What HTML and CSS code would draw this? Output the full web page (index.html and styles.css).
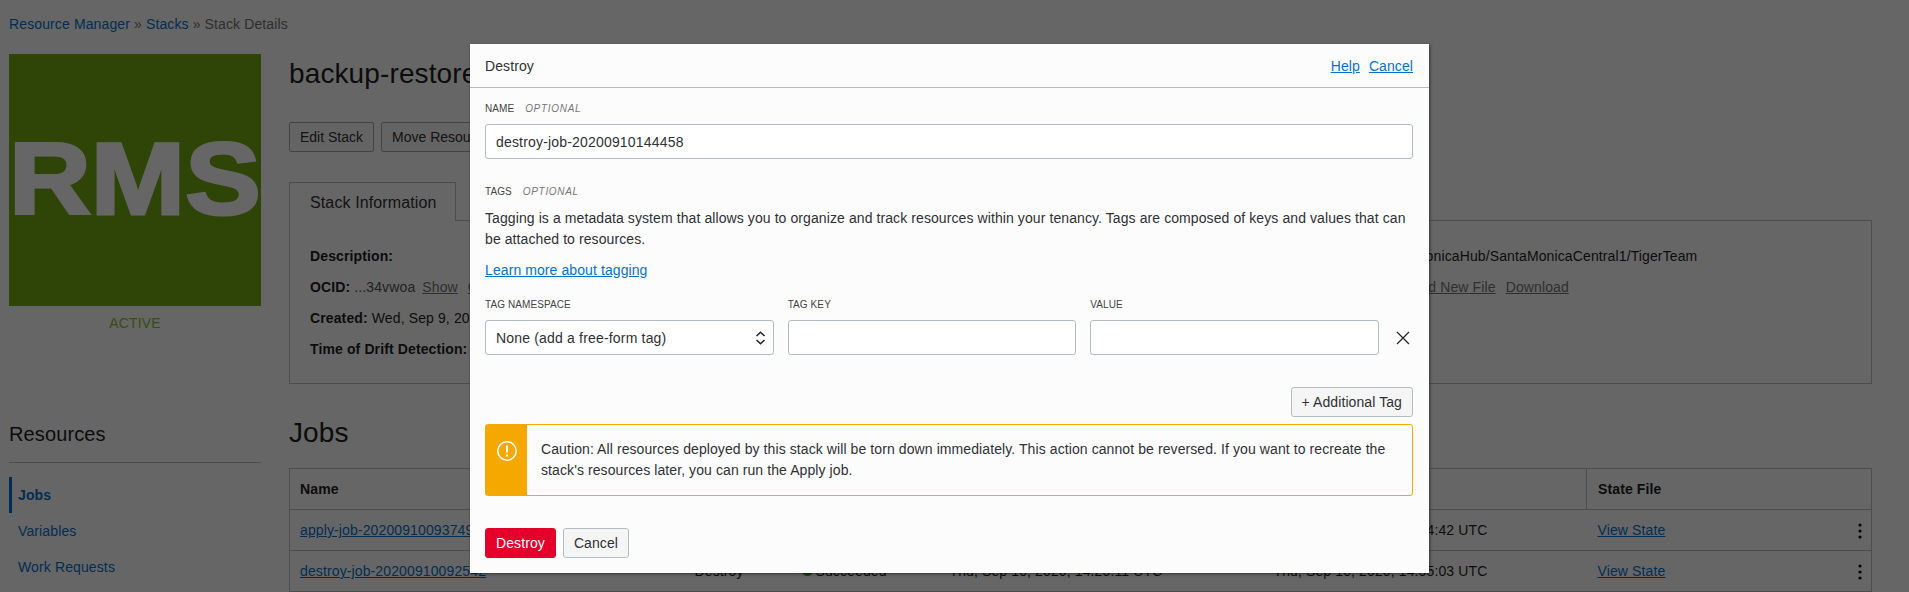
FILE: index.html
```html
<!DOCTYPE html>
<html lang="en">
<head>
<meta charset="utf-8">
<title>Stack Details</title>
<link rel="stylesheet" href="styles.css">
</head>
<body>
  <div class="page">
    <div class="breadcrumb"><a>Resource Manager</a> » <a>Stacks</a> » Stack Details</div>

    <div class="top-row">
      <div class="side">
        <div class="avatar"><span>RMS</span></div>
        <div class="status">ACTIVE</div>
      </div>
      <div class="main">
        <h1>backup-restore</h1>
        <div class="btn-row">
          <button class="btn">Edit Stack</button>
          <button class="btn">Move Resource</button>
          <button class="btn">Terraform Actions</button>
        </div>
        <div class="tabs"><div class="tab">Stack Information</div></div>
        <div class="panel">
          <div class="info-col">
            <p><b>Description:</b></p>
            <p><b>OCID:</b> <span class="muted">...34vwoa</span> <a class="plain">Show</a> <a class="plain">Copy</a></p>
            <p><b>Created:</b> Wed, Sep 9, 2020, 14:31:22 UTC</p>
            <p class="drift"><b>Time of Drift Detection:</b></p>
          </div>
          <div class="info-col">
            <p><b>Compartment:</b> ateam/SantaMonicaHub/SantaMonicaCentral1/TigerTeam</p>
            <p class="file-row"><b>Configuration:</b> <a class="plain">Upload New File</a> <a class="plain">Download</a></p>
          </div>
        </div>
      </div>
    </div>

    <div class="bottom-row">
      <div class="side">
        <h3>Resources</h3>
        <ul class="nav">
          <li class="on">Jobs</li>
          <li>Variables</li>
          <li>Work Requests</li>
        </ul>
      </div>
      <div class="main">
        <h2>Jobs</h2>
        <table class="jobs">
          <colgroup>
            <col class="c-name"><col class="c-type"><col class="c-state"><col class="c-time"><col class="c-time2"><col>
          </colgroup>
          <tr>
            <th>Name</th><th>Type</th><th>State</th><th>Created</th><th>Finished</th><th class="state-file">State File</th>
          </tr>
          <tr>
            <td><a>apply-job-20200910093749</a></td><td>Apply</td>
            <td><span class="dot"></span>Succeeded</td>
            <td>Thu, Sep 10, 2020, 09:38:02 UTC</td><td>Thu, Sep 10, 2020, 09:44:42 UTC</td>
            <td class="state-file"><a>View State</a>
              <svg class="kebab" width="4" height="16" viewBox="0 0 4 16"><circle cx="2" cy="2" r="1.6"/><circle cx="2" cy="8" r="1.6"/><circle cx="2" cy="14" r="1.6"/></svg>
            </td>
          </tr>
          <tr>
            <td><a>destroy-job-20200910092542</a></td><td>Destroy</td>
            <td><span class="dot"></span>Succeeded</td>
            <td>Thu, Sep 10, 2020, 14:25:11 UTC</td><td>Thu, Sep 10, 2020, 14:55:03 UTC</td>
            <td class="state-file"><a>View State</a>
              <svg class="kebab" width="4" height="16" viewBox="0 0 4 16"><circle cx="2" cy="2" r="1.6"/><circle cx="2" cy="8" r="1.6"/><circle cx="2" cy="14" r="1.6"/></svg>
            </td>
          </tr>
        </table>
      </div>
    </div>
  </div>

  <div class="overlay"></div>

  <div class="modal">
    <div class="modal-head">
      <span>Destroy</span>
      <span class="head-links"><a>Help</a><a>Cancel</a></span>
    </div>
    <div class="modal-body">
      <label class="field-label">NAME <i>OPTIONAL</i></label>
      <input class="field" type="text" value="destroy-job-20200910144458">

      <label class="field-label tags-label">TAGS <i>OPTIONAL</i></label>
      <p class="tag-help">Tagging is a metadata system that allows you to organize and track resources within your tenancy. Tags are composed of keys and values that can be attached to resources.</p>
      <a class="learn">Learn more about tagging</a>

      <div class="tag-grid">
        <label class="field-label">TAG NAMESPACE</label>
        <label class="field-label">TAG KEY</label>
        <label class="field-label">VALUE</label>
        <span></span>
        <div class="field select">
          <span>None (add a free-form tag)</span>
          <svg width="11" height="14" viewBox="0 0 11 14" fill="none" stroke="#222" stroke-width="1.5"><path d="M1.5 5 5.5 1.2 9.5 5"/><path d="M1.5 9 5.5 12.8 9.5 9"/></svg>
        </div>
        <input class="field" type="text">
        <input class="field" type="text">
        <svg class="remove" width="14" height="14" viewBox="0 0 14 14" fill="none" stroke="#222" stroke-width="1.2"><path d="M1 1 13 13M13 1 1 13"/></svg>
      </div>

      <div class="add-row"><button class="btn-light">+ Additional Tag</button></div>

      <div class="warn">
        <div class="warn-icon">
          <svg width="22" height="22" viewBox="0 0 22 22" fill="none" stroke="#fff" stroke-width="1.5"><circle cx="11" cy="11" r="9.2"/><path d="M11 5.5v7" stroke-width="2"/><path d="M11 14.4v2" stroke-width="2"/></svg>
        </div>
        <div class="warn-text">Caution: All resources deployed by this stack will be torn down immediately. This action cannot be reversed. If you want to recreate the stack's resources later, you can run the Apply job.</div>
      </div>

      <div class="actions">
        <button class="btn-danger">Destroy</button>
        <button class="btn-light">Cancel</button>
      </div>
    </div>
  </div>
</body>
</html>
```

FILE: styles.css
```css
html, body {
  margin: 0;
  height: 592px;
  overflow: hidden;
}
body {
  position: relative;
  background-color: white;
  color: #1f1f1f;
  font-family: "Liberation Sans", Arial, sans-serif;
  font-size: 14px;
  letter-spacing: 0.12px;
}
a {
  color: #0572ce;
}
.page {
  padding: 14px 37px 0 9px;
}
.breadcrumb {
  line-height: 20px;
  color: #757575;
  margin-bottom: 20px;
}
.top-row, .bottom-row {
  display: flex;
  gap: 28px;
}
.bottom-row {
  margin-top: 32px;
}
.side {
  width: 252px;
  flex: none;
}
.main {
  flex: 1;
  min-width: 0;
}
.avatar {
  width: 252px;
  height: 252px;
  display: flex;
  align-items: center;
  justify-content: center;
  overflow: hidden;
  background-color: #75ac16;
  color: white;
}
.avatar span {
  display: block;
  font-size: 102.5px;
  font-weight: bold;
  letter-spacing: 0;
  -webkit-text-stroke: 3px white;
  transform: translateY(-1px) scaleX(1.105);
}
.status {
  text-align: center;
  line-height: 20px;
  margin-top: 7px;
  color: #8cc21f;
}
h1, h2 {
  margin: 0;
  font-size: 28px;
  font-weight: normal;
  line-height: 34px;
}
h1 {
  margin-top: 3px;
}
.btn-row {
  display: flex;
  gap: 7px;
  margin-top: 31px;
}
.btn {
  height: 30px;
  padding: 0 10px;
  border: 1px solid #a8a8a8;
  border-radius: 2px;
  background-color: #fafafa;
  color: #333;
  font: inherit;
}
.tabs {
  margin-top: 30px;
  height: 38px;
}
.tab {
  box-sizing: border-box;
  width: 167px;
  height: 39px;
  padding: 0 20px;
  position: relative;
  z-index: 1;
  border: 1px solid #c0c0c0;
  border-bottom: none;
  background-color: white;
  font-size: 16px;
  line-height: 39px;
  color: #333;
  white-space: nowrap;
}
.panel {
  box-sizing: border-box;
  height: 164px;
  border: 1px solid #c0c0c0;
  padding: 25px 20px 0;
  display: grid;
  grid-template-columns: 922px 1fr;
}
.panel p {
  margin: 0 0 11px;
  line-height: 20px;
}
.muted {
  color: #555;
  margin-right: 3px;
}
.plain {
  color: #777;
  text-decoration: underline;
  margin-right: 6px;
}
.file-row b {
  margin-right: 57px;
}
h3 {
  margin: 6px 0 14px;
  padding-bottom: 16px;
  border-bottom: 1px solid #c0c0c0;
  font-size: 20px;
  font-weight: normal;
  line-height: 24px;
}
.nav {
  list-style: none;
  margin: 0;
  padding: 0;
}
.nav li {
  height: 36px;
  line-height: 36px;
  padding-left: 9px;
  color: #0572ce;
}
.nav li.on {
  border-left: 3px solid #0572ce;
  padding-left: 6px;
  font-weight: bold;
}
.jobs {
  width: 100%;
  margin-top: 18px;
  table-layout: fixed;
  border-collapse: collapse;
}
.c-name { width: 394px; }
.c-type { width: 107px; }
.c-state { width: 148px; }
.c-time { width: 324px; }
.c-time2 { width: 324px; }
.jobs th, .jobs td {
  height: 40px;
  padding: 0 0 0 11px;
  text-align: left;
  border-top: 1px solid #c0c0c0;
  border-bottom: 1px solid #c0c0c0;
  white-space: nowrap;
}
.jobs a {
  text-decoration: underline;
}
.jobs tr th:first-child, .jobs tr td:first-child {
  border-left: 1px solid #c0c0c0;
  padding-left: 10px;
}
.jobs tr th:last-child, .jobs tr td:last-child {
  border-right: 1px solid #c0c0c0;
}
.jobs th {
  font-weight: bold;
}
.jobs th.state-file {
  border-left: 1px solid #c0c0c0;
}
.jobs td.state-file {
  position: relative;
}
.kebab {
  position: absolute;
  right: 9px;
  top: 13px;
  fill: #111;
}
.dot {
  display: inline-block;
  width: 11px;
  height: 11px;
  border-radius: 50%;
  background-color: #2aa82a;
  margin-right: 3px;
}
.overlay {
  position: absolute;
  top: 0;
  right: 0;
  bottom: 0;
  left: 0;
  z-index: 2;
  background-color: rgba(0, 0, 0, 0.6);
}
.modal {
  position: absolute;
  left: 470px;
  top: 44px;
  z-index: 3;
  box-sizing: border-box;
  width: 959px;
  height: 529px;
  background-color: #fcfcfc;
  color: #2f3136;
  letter-spacing: 0.09px;
  box-shadow: 1px 1px 3px rgba(0, 0, 0, 0.5);
}
.modal-head {
  box-sizing: border-box;
  height: 44px;
  display: flex;
  align-items: center;
  justify-content: space-between;
  padding: 0 16px 0 15px;
  border-bottom: 1px solid #b5bbc5;
}
.head-links a {
  margin-left: 9px;
  text-decoration: underline;
}
.modal-body {
  padding: 14px 16px 15px 15px;
}
.field-label {
  display: block;
  height: 14px;
  line-height: 14px;
  margin-bottom: 8px;
  font-size: 10px;
  color: #444;
}
.field-label i {
  margin-left: 8px;
  color: #777;
  letter-spacing: 0.7px;
}
.tags-label {
  margin: 26px 0 0;
}
.field {
  display: block;
  box-sizing: border-box;
  width: 100%;
  height: 35px;
  padding: 0 10px;
  border: 1px solid #b5bbc5;
  border-radius: 3px;
  background-color: white;
  color: #2f3136;
  font: inherit;
  letter-spacing: 0.18px;
}
.tag-help {
  margin: 9px 0 10px;
  line-height: 21px;
}
.learn {
  display: block;
  line-height: 21px;
  text-decoration: underline;
}
.tag-grid {
  display: grid;
  grid-template-columns: 1fr 1fr 1fr 20px;
  column-gap: 14px;
  margin-top: 17px;
  align-items: center;
}
.select {
  display: flex;
  align-items: center;
  justify-content: space-between;
  padding-right: 7px;
}
.remove {
  justify-self: center;
}
.add-row {
  display: flex;
  justify-content: flex-end;
  margin-top: 32px;
}
.btn-light, .btn-danger {
  height: 30px;
  padding: 0 10px;
  border: 1px solid #b5bbc5;
  border-radius: 3px;
  background-color: #f5f5f5;
  color: #2f3136;
  font: inherit;
  letter-spacing: inherit;
}
.btn-danger {
  border-color: #e4002b;
  background-color: #e4002b;
  color: white;
}
.warn {
  box-sizing: border-box;
  display: flex;
  height: 72px;
  margin-top: 7px;
  border: 1px solid #f5a800;
  border-radius: 3px;
}
.warn-icon {
  width: 41px;
  flex: none;
  display: flex;
  justify-content: center;
  padding-top: 15px;
  box-sizing: border-box;
  background-color: #f5a800;
}
.warn-text {
  padding: 14px 14px 0;
  line-height: 21px;
}
.actions {
  display: flex;
  gap: 7px;
  margin-top: 32px;
}
```
